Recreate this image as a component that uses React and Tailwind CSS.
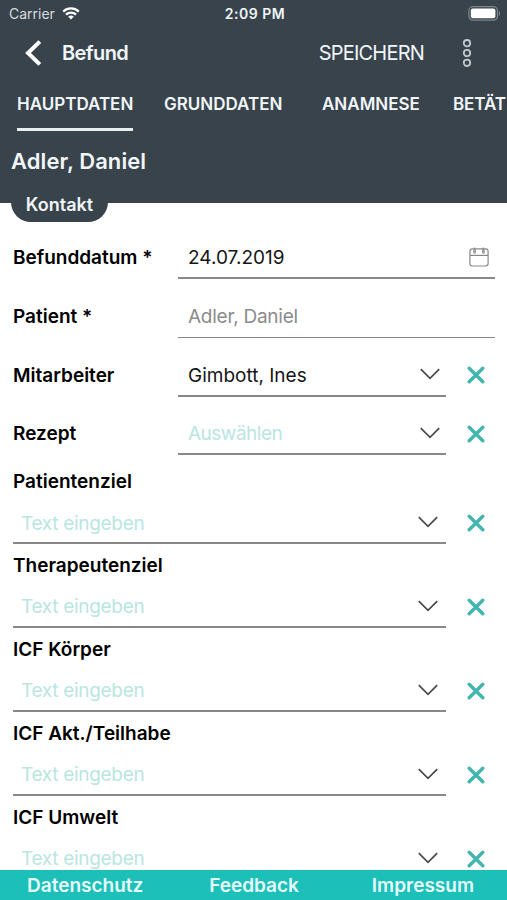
import React from 'react';

const abas = [
  { titulo: 'HAUPTDATEN', className: 'ml-[17px] w-[116px]', ativa: true },
  { titulo: 'GRUNDDATEN', className: 'ml-[31px] w-[119px]' },
  { titulo: 'ANAMNESE', className: 'ml-[39px] w-[97px]' },
  { titulo: 'BETÄT', className: 'ml-[34px] tracking-[-0.1px]' },
];

const camposTexto = ['Patientenziel', 'Therapeutenziel', 'ICF Körper', 'ICF Akt./Teilhabe', 'ICF Umwelt'];

function WifiIcon() {
  return (
    <svg width="18" height="13" viewBox="0 0 18 13" fill="none" stroke="#fff" strokeWidth="2.3">
      <path d="M1.2 4.6a11.2 11.2 0 0 1 15.6 0" />
      <path d="M4 7.7a7.2 7.2 0 0 1 10 0" />
      <path d="M9 12.4 6.2 9.7a4.1 4.1 0 0 1 5.6 0Z" fill="#fff" stroke="none" />
    </svg>
  );
}

function BatteryIcon() {
  return (
    <svg width="33" height="15" viewBox="0 0 33 15" fill="none">
      <rect x="0.9" y="0.7" width="28.6" height="13.4" rx="4" stroke="#7e868c" strokeWidth="1.3" />
      <rect x="2.8" y="2.6" width="24.6" height="9.6" rx="2" fill="#fff" />
      <path d="M31 5.2c1.4.6 1.4 4 0 4.6Z" fill="#7e868c" />
    </svg>
  );
}

function CalendarIcon() {
  return (
    <svg width="20" height="20" viewBox="0 0 20 20" fill="none" stroke="#85898c" strokeWidth="1.2">
      <rect x="0.9" y="1.8" width="18.2" height="17.2" rx="2.4" />
      <path d="M1 8.4h18" />
      <ellipse cx="5.6" cy="4.4" rx="0.8" ry="1.8" />
      <ellipse cx="14.4" cy="4.4" rx="0.8" ry="1.8" />
      <path d="M5.6 0.6v2M14.4 0.6v2" />
    </svg>
  );
}

function ChevronIcon() {
  return (
    <svg width="20" height="12" viewBox="0 0 20 12" fill="none" stroke="#47494c" strokeWidth="1.7" className="shrink-0">
      <path d="M0.8 1.2 10 10.4 19.2 1.2" />
    </svg>
  );
}

function ClearButton() {
  return (
    <button type="button" aria-label="Löschen" className="flex w-[60px] shrink-0 items-center justify-center">
      <svg width="18" height="18" viewBox="0 0 18 18" fill="none" stroke="#41b5ae" strokeWidth="3.4" strokeLinecap="round">
        <path d="M2.2 2.2 15.8 15.8M15.8 2.2 2.2 15.8" />
      </svg>
    </button>
  );
}

function Linha({ label, children }) {
  return (
    <div className="flex h-[58.7px] pl-[13px]">
      <label className="w-[165px] shrink-0 pt-[23.7px] text-[19px] leading-[28px] font-semibold">{label}</label>
      {children}
    </div>
  );
}

function CampoSelecao({ label, valor, placeholder }) {
  return (
    <Linha label={label}>
      <div className="flex w-[268px] items-center justify-between border-b-2 border-[#858789] pt-[15px] pr-1.5 pl-2.5 text-[19px]">
        <span className={valor ? 'pt-[4px] text-[#151515]' : 'pt-[3px] tracking-[-0.5px] text-[#b9e6df]'}>{valor || placeholder}</span>
        <ChevronIcon />
      </div>
      <div className="flex pt-[16px]">
        <ClearButton />
      </div>
    </Linha>
  );
}

function CampoTexto({ label }) {
  return (
    <div className="h-[83.85px] pl-[13px]">
      <label className="block pt-2 text-[19px] leading-[28px] font-semibold">{label}</label>
      <div className="flex h-[48px]">
        <div className="flex w-[433px] items-center justify-between border-b-2 border-[#858789] pt-[6px] pr-2 pl-2 text-[19px]">
          <span className="pt-[3px] tracking-[-0.3px] text-[#b9e6df]">Text eingeben</span>
          <ChevronIcon />
        </div>
        <div className="flex pt-[6px]">
          <ClearButton />
        </div>
      </div>
    </div>
  );
}

export default function App() {
  return (
    <div className="flex h-[900px] w-[507px] flex-col overflow-hidden bg-white font-['Inter',sans-serif] text-black">
      <header className="h-[203px] shrink-0 bg-[#38434c] text-[#f1f6f8]">
        <div className="grid h-[27px] grid-cols-3 items-center pr-[6px] pl-[9px] text-[14px]">
          <div className="flex items-center gap-[7px]">
            <span className="text-[#d8dcdf]">Carrier</span>
            <WifiIcon />
          </div>
          <span className="text-center font-semibold tracking-[0.5px]">2:09 PM</span>
          <div className="flex justify-end">
            <BatteryIcon />
          </div>
        </div>
        <div className="flex h-[51px] items-center pl-[25px]">
          <svg width="17" height="26" viewBox="0 0 17 26" fill="none" stroke="#fff" strokeWidth="4">
            <path d="M14.8 1.6 3 13l11.8 11.4" />
          </svg>
          <h1 className="ml-5 text-[20px] font-semibold tracking-[-0.6px]">Befund</h1>
          <button type="button" className="ml-auto pt-px text-[20px] tracking-[-0.8px]">SPEICHERN</button>
          <svg width="10" height="28" viewBox="0 0 10 28" fill="none" stroke="#c3c9cd" strokeWidth="1.8" className="mr-[35px] ml-[38px]">
            <circle cx="5" cy="4.2" r="3.2" />
            <circle cx="5" cy="14" r="3.2" />
            <circle cx="5" cy="23.8" r="3.2" />
          </svg>
        </div>
        <nav className="flex h-[53px] overflow-hidden text-[17px] font-semibold whitespace-nowrap">
          {abas.map((aba) => (
            <div key={aba.titulo} className={`flex shrink-0 flex-col justify-end ${aba.className}`}>
              <span className="h-[36px]">{aba.titulo}</span>
              <span className={aba.ativa ? 'h-[3px] bg-[#e9eeee]' : 'h-[3px]'} />
            </div>
          ))}
        </nav>
        <p className="pt-4 pl-[11px] text-[22px] leading-[28px] font-semibold tracking-[0.08px]">Adler, Daniel</p>
        <div className="mt-[10px] ml-[11px] flex h-[37px] w-[97px] items-center justify-center rounded-b-[20px] bg-[#38434c] pt-px text-[18px] font-semibold">
          Kontakt
        </div>
      </header>

      <main className="min-h-0 flex-1 overflow-hidden pt-[17.6px]">
        <Linha label="Befunddatum *">
          <div className="flex w-[317px] items-center justify-between border-b-2 border-[#858789] pt-[16px] pr-1.5 pl-2.5 text-[19px] text-[#151515]">
            <span className="pt-[2px]">24.07.2019</span>
            <CalendarIcon />
          </div>
        </Linha>
        <Linha label="Patient *">
          <div className="flex w-[317px] items-center border-b border-[#858789] pt-[15px] pl-2.5 text-[19px] text-[#8b8b8b]">
            <span className="pt-[3px] tracking-[-0.25px]">Adler, Daniel</span>
          </div>
        </Linha>
        <CampoSelecao label="Mitarbeiter" valor="Gimbott, Ines" />
        <CampoSelecao label="Rezept" placeholder="Auswählen" />
        <div className="pt-[5px]">
          {camposTexto.map((campo) => (
            <CampoTexto key={campo} label={campo} />
          ))}
        </div>
      </main>

      <footer className="flex h-[30px] shrink-0 items-center justify-between bg-[#1dbfb9] pt-[2px] pr-[33px] pl-[27px] text-[19px] font-semibold text-[#e6fbf9]">
        <span>Datenschutz</span>
        <span className="mr-[7px]">Feedback</span>
        <span>Impressum</span>
      </footer>
    </div>
  );
}
